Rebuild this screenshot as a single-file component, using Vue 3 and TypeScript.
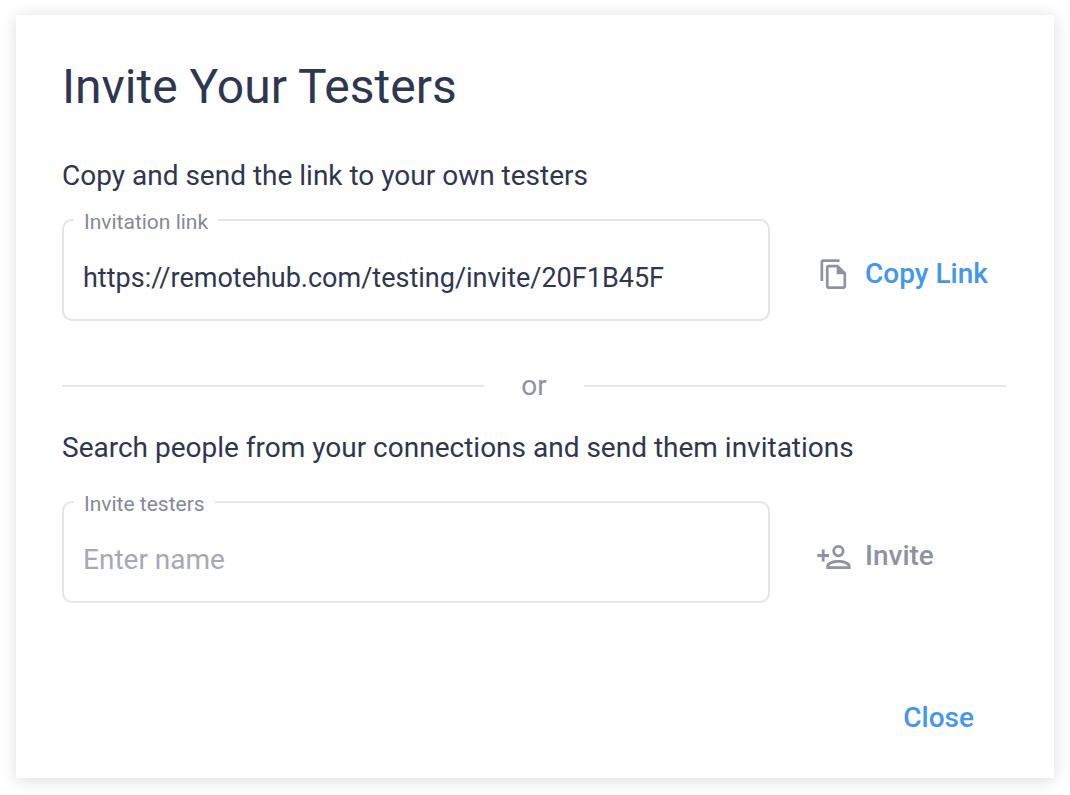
<script setup lang="ts">
import { ref } from 'vue'

const link = ref<string>('https://remotehub.com/testing/invite/20F1B45F')
const tester = ref<string>('')
</script>

<template>
  <main class="dialog" role="dialog" aria-labelledby="dialog-title">
    <h1 id="dialog-title">Invite Your Testers</h1>

    <p class="hint">Copy and send the link to your own testers</p>
    <div class="row">
      <fieldset class="field">
        <legend><label for="link">Invitation link</label></legend>
        <input id="link" v-model="link" class="url" type="text" readonly />
      </fieldset>
      <button type="button" class="action primary">
        <svg class="icon" viewBox="0 0 36 36" aria-hidden="true">
          <g transform="translate(1.8 2) scale(1.35)">
            <path
              fill-rule="evenodd"
              d="M16 1H4C2.9 1 2 1.9 2 3v14h2V3h12V1zM15 5l6 6v10c0 1.1-.9 2-2 2H8c-1.1 0-2-.9-2-2V7c0-1.1.9-2 2-2h7zM8 7v14h11v-9h-5V7H8z"
            />
          </g>
        </svg>
        <span>Copy Link</span>
      </button>
    </div>

    <div class="divider"><span>or</span></div>

    <p class="hint">Search people from your connections and send them invitations</p>
    <div class="row people">
      <fieldset class="field">
        <legend><label for="tester">Invite testers</label></legend>
        <input id="tester" v-model="tester" type="text" placeholder="Enter name" />
      </fieldset>
      <button type="button" class="action">
        <svg class="icon" viewBox="0 0 36 36" aria-hidden="true">
          <path d="M5.8 11.5h2.8v4.6H13v2.8H8.6v4.6H5.8v-4.6H1.3v-2.8h4.5z" />
          <path
            fill-rule="evenodd"
            d="M22.4 7a6.1 6.1 0 1 0 0 12.2 6.1 6.1 0 0 0 0-12.2zm0 2.8a3.3 3.3 0 1 1 0 6.6 3.3 3.3 0 0 1 0-6.6zM10.3 31v-3.2c0-3.9 6.8-5.8 12.1-5.8s12.2 1.9 12.2 5.8V31zM13.1 28.3h18.7c-.7-1.8-4.7-3.5-9.4-3.5s-8.6 1.7-9.3 3.5z"
          />
        </svg>
        <span>Invite</span>
      </button>
    </div>

    <footer>
      <button type="button" class="close">Close</button>
    </footer>
  </main>
</template>

<style>
body {
  margin: 0;
  background: #fff;
}
</style>

<style scoped>
.dialog {
  box-sizing: border-box;
  margin: 15px 16px 16px;
  padding: 44px 48px 42px 46px;
  background: #fff;
  box-shadow: 0 2px 16px rgba(0, 0, 0, 0.14);
  color: #2f3650;
  font-family: Roboto, 'Liberation Sans', sans-serif;
  font-size: 28px;
  line-height: 32px;
}

h1 {
  margin: 0 0 45px;
  font-size: 48px;
  font-weight: 400;
  line-height: 56px;
}

.hint {
  margin: 0;
}

.row {
  display: grid;
  grid-template-columns: 3fr 1fr;
  align-items: end;
  margin-top: 14px;
}

.people {
  margin-top: 24px;
}

.field {
  min-width: 0;
  margin: 0;
  padding: 0 10px;
  border: 2px solid #e5e5eb;
  border-radius: 10px;
}

legend {
  padding: 4px 10px 0;
  color: #858998;
  font-size: 21px;
  line-height: 24px;
}

legend label {
  display: block;
}

input {
  box-sizing: border-box;
  display: block;
  width: 100%;
  height: 85px;
  padding: 2px 9px 0;
  border: 0;
  outline: 0;
  background: transparent;
  color: inherit;
  font: inherit;
}

.url {
  font-size: 27px;
}

input::placeholder {
  color: #a6a9b5;
  opacity: 1;
}

button {
  border: 0;
  background: transparent;
  font: inherit;
  font-weight: 500;
  cursor: pointer;
}

.action {
  display: flex;
  align-items: center;
  gap: 13px;
  margin-bottom: 27px;
  padding: 0 0 0 46px;
  color: #8f92a1;
  line-height: 40px;
  white-space: nowrap;
}

.icon {
  flex: none;
  width: 36px;
  height: 36px;
  fill: #8f92a1;
}

.primary,
.close {
  color: #4597ec;
}

.divider {
  display: flex;
  align-items: center;
  gap: 37px;
  margin: 49px 0 30px;
  color: #8f92a1;
}

.divider::before,
.divider::after {
  content: '';
  flex: 1;
  height: 2px;
  background: #e5e5eb;
}

footer {
  display: flex;
  justify-content: flex-end;
  margin-top: 97px;
  padding-right: 32px;
}

.close {
  padding: 0;
  line-height: 36px;
}
</style>
